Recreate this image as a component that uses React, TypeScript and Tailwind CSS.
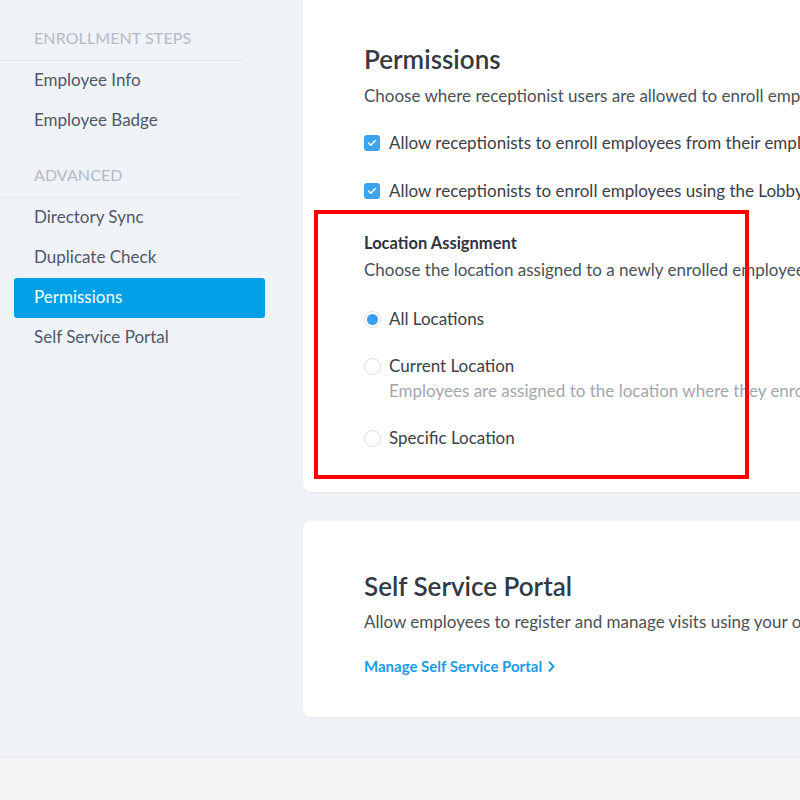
import React from 'react';
import { ChevronRight } from 'lucide-react';

const font = { fontFamily: 'Lato, "Noto Sans", sans-serif' };

function SideHeading({ label }: { label: string }) {
  return (
    <div className="mr-[58px] border-b border-[#e4e8ee] pb-[12px] pl-[34px] text-[16px] leading-[20px] tracking-[0.1px] text-[#b4bbc6]">
      {label}
    </div>
  );
}

function SideItem({ label, active = false }: { label: string; active?: boolean }) {
  return (
    <div
      className={
        active
          ? 'mx-[14px] mr-[38px] flex h-[40px] items-center rounded-[3px] bg-[#00a0e6] pb-[3px] pl-[20px] text-[17px] text-white'
          : 'flex h-[40px] items-center pb-[3px] pl-[34px] text-[17px] text-[#4f5869]'
      }
    >
      {label}
    </div>
  );
}

function Checkbox({ label }: { label: string }) {
  return (
    <div className="flex h-[24px] items-center gap-[9px] whitespace-nowrap text-[17px] text-[#3a4048]">
      <span className="flex h-[16px] w-[16px] shrink-0 items-center justify-center rounded-[3px] bg-[#3fa4f0]">
        <svg viewBox="0 0 16 16" className="h-[12px] w-[12px]">
          <path d="M3.5 8.2l3 2.8 6-6.2" fill="none" stroke="white" strokeWidth="2" strokeLinecap="round" strokeLinejoin="round" />
        </svg>
      </span>
      {label}
    </div>
  );
}

function Radio({ label, checked = false }: { label: string; checked?: boolean }) {
  return (
    <div className="flex h-[24px] items-center gap-[8px] whitespace-nowrap text-[17px] text-[#3a4048]">
      <span className="flex h-[17px] w-[17px] shrink-0 items-center justify-center rounded-full border border-[#d7dde5] bg-white">
        {checked && <span className="h-[11px] w-[11px] rounded-full bg-[#3a9ff0]" />}
      </span>
      {label}
    </div>
  );
}

export default function App() {
  return (
    <div className="flex h-[800px] flex-col overflow-hidden bg-[#eff2f7]" style={font}>
      <div className="flex flex-1">
        {/* Sidebar */}
        <aside className="w-[303px] shrink-0 pt-[28px]">
          <SideHeading label="ENROLLMENT STEPS" />
          <SideItem label="Employee Info" />
          <SideItem label="Employee Badge" />
          <div className="h-[24px]" />
          <SideHeading label="ADVANCED" />
          <SideItem label="Directory Sync" />
          <SideItem label="Duplicate Check" />
          <SideItem label="Permissions" active />
          <SideItem label="Self Service Portal" />
        </aside>

        {/* Main */}
        <main className="min-w-0 flex-1 overflow-hidden">
          <div className="flex w-[720px] flex-col gap-[29px]">
            <section className="relative rounded-b-[8px] bg-white pb-[42px] pl-[61px] pt-[43px] shadow-[0_1px_3px_rgba(0,0,0,0.05)]">
              <h1 className="text-[26px] font-semibold leading-[32px] text-[#333a43]">Permissions</h1>
              <p className="mt-[9px] whitespace-nowrap text-[17px] leading-[24px] text-[#4a5058]">
                Choose where receptionist users are allowed to enroll employees.
              </p>
              <div className="mt-[23px] flex flex-col gap-[24px]">
                <Checkbox label="Allow receptionists to enroll employees from their employee directory" />
                <Checkbox label="Allow receptionists to enroll employees using the Lobby app" />
              </div>

              <h2 className="mt-[30px] text-[16.5px] font-bold leading-[20px] text-[#2e343d]">Location Assignment</h2>
              <p className="mt-[5px] whitespace-nowrap text-[17px] leading-[24px] text-[#4a5058]">
                Choose the location assigned to a newly enrolled employee.
              </p>
              <div className="mt-[25px]">
                <Radio label="All Locations" checked />
              </div>
              <div className="mt-[23px]">
                <Radio label="Current Location" />
                <p className="mt-[1px] whitespace-nowrap pl-[25px] text-[17px] leading-[24px] text-[#a3a7ad]">
                  Employees are assigned to the location where they enroll.
                </p>
              </div>
              <div className="mt-[23px]">
                <Radio label="Specific Location" />
              </div>

              {/* annotation */}
              <div className="pointer-events-none absolute left-[11px] top-[210px] h-[269px] w-[435px] border-[4px] border-[#ff0000]" />
            </section>

            <section className="rounded-[8px] bg-white pb-[41px] pl-[61px] pt-[49px] shadow-[0_1px_3px_rgba(0,0,0,0.05)]">
              <h1 className="text-[26px] font-semibold leading-[32px] text-[#333a43]">Self Service Portal</h1>
              <p className="mt-[8px] whitespace-nowrap text-[17px] leading-[24px] text-[#4a5058]">
                Allow employees to register and manage visits using your organization's portal.
              </p>
              <a className="mt-[22px] flex h-[20px] items-center gap-[1px] text-[15px] font-bold text-[#1a9be6]">
                Manage Self Service Portal
                <ChevronRight className="h-[17px] w-[17px]" strokeWidth={2.75} />
              </a>
            </section>
          </div>
        </main>
      </div>

      <footer className="h-[43px] shrink-0 border-t border-[#e2e5e9] bg-[#f4f4f4]" />
    </div>
  );
}
